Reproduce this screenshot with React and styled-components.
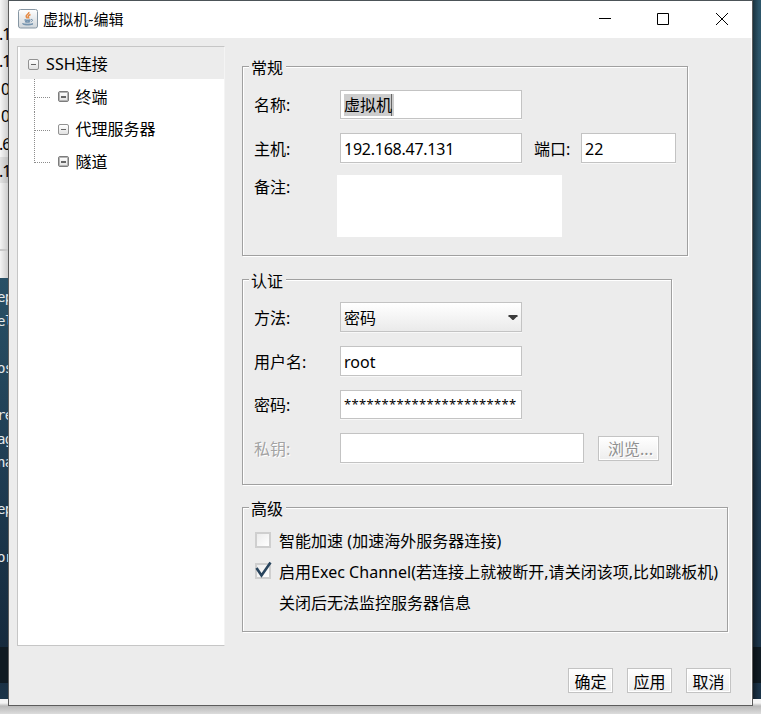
import React, { useState } from 'react';
import styled, { createGlobalStyle, css } from 'styled-components';

const GlobalStyle = createGlobalStyle`
    * {
        box-sizing: border-box;
    }
    body {
        margin: 0;
        overflow: hidden;
        font-family: 'Noto Sans', 'Noto Sans CJK SC', sans-serif;
        font-size: 16px;
        line-height: 20px;
        color: #000;
    }
    input, button, textarea {
        font: inherit;
        color: inherit;
        border-radius: 0;
        margin: 0;
    }
`;

const Desktop = styled.div`
    display: grid;
    grid-template-columns: 8px 745px 8px;
    width: 761px;
    height: 714px;
    background: linear-gradient(#ececec 699px, #f4f4f4 699px, #f4f4f4 703px, #b9b9b9 706px, #dcdcdc 714px);
`;

const LeftEdge = styled.div`
    display: flex;
    flex-direction: column;
    height: 699px;
    overflow: hidden;
`;
const HostList = styled.div`
    height: 278px;
    padding-top: 21px;
    background:
        linear-gradient(#c8c8c8, #c8c8c8) 0 249px / 8px 2px no-repeat,
        linear-gradient(90deg, transparent, rgba(0, 0, 0, 0.16)),
        linear-gradient(#f6f6f6 157px, #e2e2e2 157px, #e2e2e2 183px, #f4f4f4 183px);
`;
const HostTail = styled.div`
    height: 27.4px;
    line-height: 27px;
    margin-left: ${(props) => (props.$wide ? '1px' : '-1px')};
    white-space: nowrap;
    letter-spacing: -1px;
`;
const Terminal = styled.div`
    flex: 1;
    padding-top: 8px;
    color: #e4e8ea;
    font-family: 'DejaVu Sans Mono', monospace;
    font-size: 14px;
    background:
        linear-gradient(#0f1a22, #0f1a22) 0 369px / 8px 36px no-repeat,
        linear-gradient(#285066, #1f3c52 45%, #15293c 90%, #1d3549);
`;
const TerminalLine = styled.div`
    height: 23.6px;
    line-height: 23px;
    margin-left: -3px;
    letter-spacing: -0.7px;
    white-space: pre;
`;
const RightEdge = styled.div`
    height: 699px;
    background:
        linear-gradient(90deg, rgba(0, 0, 0, 0.4), transparent 6px),
        linear-gradient(#101c24, #101c24) 0 647px / 8px 36px no-repeat,
        linear-gradient(#2d566a, #2a5167 40%, #1f3a50 70%, #1b3348);
`;

const Dialog = styled.div`
    display: flex;
    flex-direction: column;
    height: 706px;
    border: 1px solid #5c5c5c;
    border-top-color: #4c5458;
    background: #ececec;
`;
const TitleBar = styled.header`
    display: flex;
    align-items: center;
    height: 37px;
    padding: 0 0 2px 9px;
    background: #fff;
`;
const Title = styled.h1`
    flex: 1;
    margin: 0 0 0 5px;
    font-size: 15px;
    font-weight: 400;
    letter-spacing: 0.15px;
`;
const WindowControls = styled.div`
    display: flex;
    gap: 46px;
    padding-right: 24px;
    svg {
        display: block;
    }
`;

const Body = styled.div`
    display: flex;
    flex: 1;
    padding: 8px 0 0 8px;
    border-right: 1px solid #fafafa;
`;
const Tree = styled.nav`
    width: 208px;
    height: 600px;
    border: 1px solid #c6c6c6;
    border-right-color: #f4f4f4;
    background: #fff;
    padding-left: 2px;
`;
const TreeRoot = styled.div`
    display: flex;
    align-items: center;
    gap: 7px;
    height: 32px;
    padding: 2px 0 0 8px;
    background: #ececec;
    letter-spacing: 0.1px;
`;
const TreeChildren = styled.ul`
    list-style: none;
    margin: 0 0 0 14px;
    padding: 0;
`;
const TreeItem = styled.li`
    display: flex;
    align-items: center;
    height: 32.5px;
    padding-top: 3px;
    &::before {
        content: '';
        align-self: flex-start;
        width: 16px;
        height: 15px;
        margin-right: 8px;
        border-bottom: 1px dotted #8c8c8c;
    }
    background: repeating-linear-gradient(#8c8c8c 0 1px, transparent 1px 2px) 0 0 / 1px
        ${(props) => (props.$last ? '17px' : '100%')} no-repeat;
`;
const Expander = styled.span`
    display: grid;
    place-items: center;
    width: 11px;
    height: 11px;
    border: 1px solid ${(props) => (props.$dark ? '#7c7c7c' : '#929292')};
    border-radius: 2px;
    background: linear-gradient(#fff, #e2e2e2);
    box-shadow: ${(props) => (props.$dark ? 'inset 0 0 0 1px #b4b4b4' : 'none')};
    &::after {
        content: '';
        width: 5px;
        height: ${(props) => (props.$dark ? '2px' : '1px')};
        background: #666;
    }
`;
const ItemText = styled.span`
    margin-left: 6.5px;
`;

const Main = styled.main`
    display: flex;
    flex-direction: column;
    flex: 1;
    padding: 20px 20px 0 17px;
`;
const Group = styled.section`
    width: ${(props) => props.$width}px;
    height: ${(props) => props.$height}px;
    margin-bottom: ${(props) => props.$gap}px;
    padding-left: 11px;
    border: 1px solid #a0a0a0;
    box-shadow: 1px 1px 0 #fff, inset 1px 1px 0 #fff;
`;
const Legend = styled.h2`
    width: 37px;
    height: 20px;
    margin: -9px 0 0 -5px;
    padding-left: 2px;
    font-size: 16px;
    font-weight: 400;
    background: #ececec;
`;
const Row = styled.div`
    display: flex;
    align-items: center;
    height: ${(props) => props.$height || 30}px;
    margin-top: ${(props) => props.$top}px;
`;
const Label = styled.label`
    width: 86px;
    padding-top: 1px;
    ${(props) =>
        props.$disabled &&
        css`
            color: #a3a3a3;
            text-shadow: 1px 1px 0 #fff;
        `}
`;
const PortLabel = styled(Label)`
    width: 47px;
    margin-left: 12px;
`;
const field = css`
    height: ${(props) => props.$height || 30}px;
    width: ${(props) => props.$width || 182}px;
    border: 1px solid #c3c3c3;
    box-shadow: 0 1px 0 #f8f8f8;
    padding: 2px 3px 0 3px;
    outline: none;
`;
const Input = styled.input`
    ${field}
    background: #fff;
    letter-spacing: ${(props) => props.$spacing || '0'};
`;
const Password = styled(Input)`
    padding-top: 0;
    font-size: 13px;
    letter-spacing: 0.34px;
`;
const NameField = styled.div`
    ${field}
    display: flex;
    align-items: center;
    padding: 0 3px;
    background: #fff;
`;
const Selected = styled.span`
    height: 22px;
    line-height: 22px;
    padding-right: 2px;
    background: linear-gradient(#666, #666) 47px 0 / 1px 22px no-repeat #cdcdcd;
`;
const Notes = styled.textarea`
    width: 225px;
    height: 62px;
    margin-left: -3px;
    border: 0;
    resize: none;
    background: #fff;
    outline: none;
`;
const NotesRow = styled(Row)`
    align-items: flex-start;
    height: 62px;
    ${Label} {
        padding-top: 2px;
    }
`;
const Select = styled.div`
    ${field}
    display: flex;
    align-items: center;
    justify-content: space-between;
    padding: 1px 3px 0 3px;
    background: linear-gradient(#fff, #eaeaea);
`;
const Button = styled.button`
    width: ${(props) => props.$width || 45}px;
    height: 25px;
    padding: 2px 0 0;
    line-height: 20px;
    text-align: center;
    white-space: nowrap;
    border: 1px solid #c3c3c3;
    box-shadow: inset 0 0 0 1px #fff;
    background: linear-gradient(#fff, #ededed);
    &:disabled {
        color: #909090;
        padding-left: 4px;
        margin-left: 14px;
        text-shadow: 1px 1px 0 #fff;
    }
`;
const Option = styled.label`
    display: flex;
    align-items: center;
    height: 32px;
    white-space: nowrap;
    letter-spacing: 0.03px;
`;
const Check = styled.span`
    width: 16px;
    height: 16px;
    margin: -2px 8px 0 1px;
    border: 2px solid #cfcfcf;
    background: linear-gradient(135deg, #ececec, #fff);
    svg {
        display: block;
        overflow: visible;
        margin: -3px 0 0 -2px;
    }
`;
const Hint = styled.p`
    margin: 6px 0 0 25px;
`;
const Footer = styled.footer`
    display: flex;
    justify-content: flex-end;
    gap: 14px;
    margin-top: 36px;
`;

const JavaIcon = () => (
    <svg width="20" height="20" viewBox="0 0 20 20" fill="none">
        <defs>
            <linearGradient id="tile" x2="0" y2="1">
                <stop stopColor="#fff" />
                <stop offset="1" stopColor="#cfd5da" />
            </linearGradient>
        </defs>
        <rect x="0.5" y="0.5" width="19" height="18.5" rx="2" fill="url(#tile)" stroke="#8696a3" />
        <path d="M10.800 3c1 1.800-3.200 2.600-2.600 4.500.2.900 1 1.200 1.200 2M12.500 5.500c-1.500.6-2.500 1.300-2.200 2.200.2.800.7 1 .2 1.800" stroke="#e58a45" strokeWidth="1.500" />
        <path d="M6.500 10.700c2 .7 4.500.7 6 0M7 12.500c1.600.6 3.800.5 5 0" stroke="#7493ae" strokeWidth="1.500" />
        <path d="M13 10.400c2.300-.2 2 1.700-.2 2.300" stroke="#7493ae" />
        <path d="M4.500 14.700c1.500 1.700 8.500 1.700 10.500.1-2.500.5-8 .5-10.500-.1z" fill="#7493ae" stroke="#7493ae" />
    </svg>
);

const TREE_ITEMS = [
    { name: '终端', dark: true },
    { name: '代理服务器' },
    { name: '隧道', dark: true },
];
const HOSTS = ['.1', '.1', '0', '0', '.6', '.1'];
const TERMINAL = ['ep', 'el', '', 'os', '', 're', 'ag', 'na', '', 'ep', '', 'or'];

function App() {
    const [exec, setExec] = useState(true);

    return (
        <>
            <GlobalStyle />
            <Desktop>
                <LeftEdge>
                    <HostList>
                        {HOSTS.map((text, i) => (
                            <HostTail key={i} $wide={text === '0'}>{text}</HostTail>
                        ))}
                    </HostList>
                    <Terminal>
                        {TERMINAL.map((text, i) => (
                            <TerminalLine key={i}>{text}</TerminalLine>
                        ))}
                    </Terminal>
                </LeftEdge>
                <Dialog>
                    <TitleBar>
                        <JavaIcon />
                        <Title>虚拟机-编辑</Title>
                        <WindowControls>
                            <svg width="12" height="12" stroke="#000"><path d="M0 5.500h12" /></svg>
                            <svg width="12" height="12" stroke="#000" fill="none"><path d="M.5.5h11v11H.5z" /></svg>
                            <svg width="13" height="12" stroke="#000"><path d="M1 0l12 12M13 0L1 12" /></svg>
                        </WindowControls>
                    </TitleBar>
                    <Body>
                        <Tree>
                            <TreeRoot><Expander />SSH连接</TreeRoot>
                            <TreeChildren>
                                {TREE_ITEMS.map((item, i) => (
                                    <TreeItem key={item.name} $last={i === TREE_ITEMS.length - 1}>
                                        <Expander $dark={item.dark} />
                                        <ItemText>{item.name}</ItemText>
                                    </TreeItem>
                                ))}
                            </TreeChildren>
                        </Tree>
                        <Main>
                            <Group $width={446} $height={190} $gap={23}>
                                <Legend>常规</Legend>
                                <Row $top={12} $height={29}>
                                    <Label>名称:</Label>
                                    <NameField $height={29}><Selected>虚拟机</Selected></NameField>
                                </Row>
                                <Row $top={14}>
                                    <Label>主机:</Label>
                                    <Input defaultValue="192.168.47.131" $spacing="-0.25px" />
                                    <PortLabel>端口:</PortLabel>
                                    <Input defaultValue="22" $width={95} />
                                </Row>
                                <NotesRow $top={12} $height={62}>
                                    <Label>备注:</Label>
                                    <Notes />
                                </NotesRow>
                            </Group>
                            <Group $width={430} $height={206} $gap={22}>
                                <Legend>认证</Legend>
                                <Row $top={11}>
                                    <Label>方法:</Label>
                                    <Select>
                                        密码
                                        <svg width="10" height="6" fill="#3c3c3c"><path d="M.5 0h9v2h-1L5.500 5h-1L1.500 2h-1z" /></svg>
                                    </Select>
                                </Row>
                                <Row $top={14}>
                                    <Label>用户名:</Label>
                                    <Input defaultValue="root" />
                                </Row>
                                <Row $top={13}>
                                    <Label>密码:</Label>
                                    <Password defaultValue="***********************" $height={29} />
                                </Row>
                                <Row $top={14}>
                                    <Label $disabled>私钥:</Label>
                                    <Input disabled $width={244} />
                                    <Button disabled $width={61}>浏览...</Button>
                                </Row>
                            </Group>
                            <Group $width={486} $height={125} $gap={0}>
                                <Legend>高级</Legend>
                                <Row $top={7}>
                                    <Option><Check />智能加速 (加速海外服务器连接)</Option>
                                </Row>
                                <Row $top={1}>
                                    <Option onClick={() => setExec(!exec)}>
                                        <Check>
                                            {exec && (
                                                <svg width="17" height="16" fill="none">
                                                    <path d="M1.500 6l5 7.500L15.500.5" stroke="#29455e" strokeWidth="2.600" />
                                                </svg>
                                            )}
                                        </Check>
                                        启用Exec Channel(若连接上就被断开,请关闭该项,比如跳板机)
                                    </Option>
                                </Row>
                                <Hint>关闭后无法监控服务器信息</Hint>
                            </Group>
                            <Footer>
                                <Button>确定</Button>
                                <Button>应用</Button>
                                <Button>取消</Button>
                            </Footer>
                        </Main>
                    </Body>
                </Dialog>
                <RightEdge />
            </Desktop>
        </>
    );
}

export default App;
